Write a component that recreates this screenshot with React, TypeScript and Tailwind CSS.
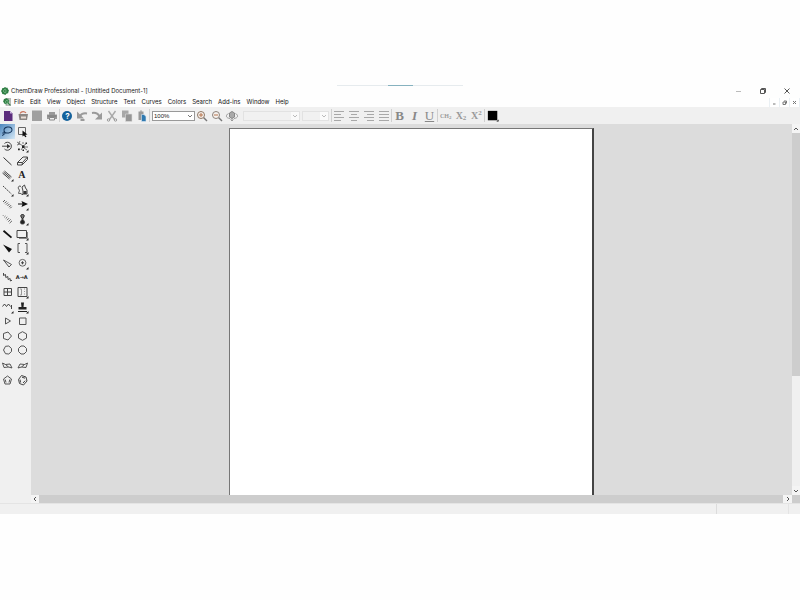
import React, { useState } from 'react';

const menus = [
  'File',
  'Edit',
  'View',
  'Object',
  'Structure',
  'Text',
  'Curves',
  'Colors',
  'Search',
  'Add-ins',
  'Window',
  'Help',
];

// little triangle for tools that open a flyout
const More = () => <path d="M13.5 11v2.5H11z" fill="#222" stroke="none" />;

const Icon = ({ children, className = 'w-[14px] h-[14px]' }: any) => (
  <svg
    viewBox="0 0 14 14"
    className={className}
    fill="none"
    stroke="#444"
    strokeWidth="1"
  >
    {children}
  </svg>
);

const AppLogo = ({ doc = false }: any) => (
  <Icon className="w-[8px] h-[8px] shrink-0">
    {doc && <path d="M5 1h9v12H5z" fill="#c4c9c4" stroke="#999" />}
    <path
      d="M7 0l2 1.500 2.500-.2.500 2.400L14 6l-1 2.500-.5 2.500-2.500.5L7.500 14 5 12.500l-2.700-.3L1.500 9.500 0 7l1.500-2.300.5-2.500 2.700-.4z"
      fill="#2e7d43"
      stroke="none"
      transform={doc ? 'scale(.8)' : undefined}
    />
    <path d="M9 4.500C7 3 4.500 4.500 4.500 7s2.500 3.500 4.500 2.500M7 7h3" stroke="#a9dcb2" />
    {doc && <path d="M9 9l4 4" stroke="#2e7d43" strokeWidth="2" />}
  </Icon>
);

const tools = [
  {
    name: 'Lasso',
    icon: (
      <>
        <ellipse cx="8" cy="6" rx="4" ry="3" transform="rotate(-12 8 6)" stroke="#16365c" />
        <path d="M5 8c-2-.5-3 1.500-1.500 2s2-1 1-2M3.500 10l-1 2" stroke="#16365c" />
      </>
    ),
  },
  {
    name: 'Marquee',
    icon: (
      <>
        <path d="M3.500 3.500h7v7h-7z" stroke="#666" />
        <path d="M7.500 6.500l5 4-2.300.3 1.300 2-1.200.5L9 11.500l-1.500 1z" fill="#111" stroke="none" />
      </>
    ),
  },
  {
    name: 'Structure Perspective',
    icon: (
      <>
        <path d="M4.500 4.500a4 4 0 1 1 0 5.500M2 7.200h6" />
        <path d="M7 5v4.500l3.500-2.200z" fill="#333" stroke="none" />
      </>
    ),
  },
  {
    name: 'Mass Fragmentation',
    icon: (
      <>
        <path d="M2 3l3 2M5 2L3.500 5M2 6l3-1M5 5l3 2M8 5V3M8 7l3-2M8 8l-2 3M9 9l3 2M8 8h5" strokeWidth=".7" />
        <path d="M7 6.500h2.500v2.500H7zM3 9.500h1.800v1.800H3zM10.500 3.500h1.500v1.500h-1.500zM7.500 10.500h1.500v1.500H7.500z" fill="#222" stroke="none" />
        <More />
      </>
    ),
  },
  { name: 'Solid Bond', icon: <path d="M3.500 3.500l8 7.500" stroke="#333" /> },
  {
    name: 'Eraser',
    icon: (
      <>
        <path d="M2.500 8.500L8 3h4.500L7.500 8.500z" />
        <path d="M2.500 8.500v2.500h4.500l.5-2.500M7 11l5.500-5.500V3" />
      </>
    ),
  },
  {
    name: 'Multiple Bonds',
    icon: (
      <>
        <path d="M2.500 5l7 6M3.500 4l7 6M4.500 3l7 6" stroke="#333" strokeWidth=".9" />
        <More />
      </>
    ),
  },
  { name: 'Text', letter: 'A' },
  {
    name: 'Dashed Bond',
    icon: (
      <>
        <path d="M3 3l8.500 8" strokeDasharray="2 .8" />
        <More />
      </>
    ),
  },
  {
    name: 'Pen',
    icon: (
      <>
        <path d="M6 3.500C3.500 2 2.500 5 4 6.500S2 11 4.500 10.500 6 12 8 11.500" />
        <path d="M7 4l2.500-2L10.500 5 12 7v4H8V8z" strokeWidth="1" />
        <path d="M8.500 8h3v3h-3z" fill="#333" stroke="none" />
        <More />
      </>
    ),
  },
  {
    name: 'Hashed Bond',
    icon: (
      <path
        d="M3 5l2-2M4.500 6.300l2-2M6 7.600l2-2M7.500 8.900l2-2M9 10.200l2-2M10.200 11.300l1.500-1.500"
        stroke="#444"
        strokeWidth=".9"
      />
    ),
  },
  {
    name: 'Arrow',
    icon: (
      <>
        <path d="M3 7h5" stroke="#111" />
        <path d="M6.500 4l6.500 3-6.500 3L7.500 7z" fill="#111" stroke="none" />
        <More />
      </>
    ),
  },
  {
    name: 'Hashed Wedged Bond',
    icon: (
      <path
        d="M3 3.700l.7-.7M4.300 5.200l1.200-1.200M5.700 6.600l1.600-1.600M7 8.200l2-2M8.300 9.700l2.400-2.400M9.600 11.200l2.400-2.400"
        stroke="#555"
        strokeWidth=".9"
      />
    ),
  },
  {
    name: 'Orbital',
    icon: (
      <>
        <path d="M7.500 7C5 4 5.500 2.500 7.500 2.500S10 4 7.500 7z" stroke="#222" fill="#777" />
        <path d="M7.500 7c-3 3-2.500 5 0 5s3-2 0-5z" fill="#222" />
        <More />
      </>
    ),
  },
  { name: 'Bold Bond', icon: <path d="M3.500 3.800l8 6.800" stroke="#111" strokeWidth="1.800" /> },
  {
    name: 'Drawing Elements',
    icon: (
      <>
        <path d="M2 3.500h9.500v7H2z" />
        <path d="M4 11.500h8.500V5" stroke="#888" />
        <More />
      </>
    ),
  },
  { name: 'Wedged Bond', icon: <path d="M3 3.500l9 4.500-3 3.500z" fill="#111" stroke="none" /> },
  {
    name: 'Brackets',
    icon: (
      <>
        <path d="M5 2.500H3v9H5M10 2.500h2v9H10" stroke="#555" />
        <More />
      </>
    ),
  },
  { name: 'Hollow Wedged Bond', icon: <path d="M3.500 4l8 4.500L9 11z" stroke="#444" strokeWidth=".9" /> },
  {
    name: 'Chemical Symbol',
    icon: (
      <>
        <circle cx="7.500" cy="6.800" r="3.400" stroke="#666" />
        <path d="M6 6.800h3M7.500 5.300v3" />
        <More />
      </>
    ),
  },
  {
    name: 'Wavy Bond',
    icon: <path d="M3.500 3v2.500l2-1 .3 3 2-1 .3 3 2-1 .3 2.500 1.600-.8" stroke="#333" strokeWidth=".9" />,
  },
  { name: 'Reaction Mapping', letter: 'A→A' },
  {
    name: 'Table',
    icon: <path d="M4 3.500h7.500v7H4zM7.500 3.500v7M4 7h7.500" stroke="#444" />,
  },
  {
    name: 'TLC Plate',
    icon: (
      <>
        <path d="M3 2.500h9v9H3z" stroke="#444" />
        <path d="M5 4h1.500v6H5M9 4h1M9 6.500h1M9 9h1" stroke="#999" />
        <More />
      </>
    ),
  },
  {
    name: 'Acyclic Chain',
    icon: (
      <>
        <path d="M2.500 6.500L4.500 4l2 2.500 2-2.500 2 2.500M11.500 5v4" stroke="#333" strokeWidth=".9" />
        <More />
      </>
    ),
  },
  {
    name: 'Templates',
    icon: (
      <>
        <path d="M6 2.500h3L8.500 7h3v2.500h-8V7h3z" fill="#222" stroke="none" />
        <path d="M3 11.500h9" stroke="#222" />
        <More />
      </>
    ),
  },
  { name: 'Cyclopropane Ring', icon: <path d="M5.500 4v6L10.500 7z" stroke="#555" /> },
  { name: 'Cyclobutane Ring', icon: <path d="M4.500 4h6.500v6.500H4.500z" stroke="#555" /> },
  { name: 'Cyclopentane Ring', icon: <path d="M3.500 4.500L8 3l3.500 4L8 11 3.500 9.500z" stroke="#555" /> },
  { name: 'Cyclohexane Ring', icon: <path d="M7.500 2.700l4 2.200v4.200l-4 2.200-4-2.200V4.900z" stroke="#555" /> },
  { name: 'Cycloheptane Ring', icon: <path d="M5.500 3.300l3.300-.3 2.700 2.500v3L8.800 11l-3.300-.3-2-3.700z" stroke="#555" /> },
  { name: 'Cyclooctane Ring', icon: <path d="M6 3h3l2.500 2.500v3L9 11H6L3.500 8.500v-3z" stroke="#555" /> },
  {
    name: 'Chair Cyclohexane 1',
    icon: <path d="M2.500 5l3 1.500 4.500-.5 2 4-3.500-1L4 9.500zM5.500 6.500L8.500 9" stroke="#444" strokeWidth=".9" />,
  },
  {
    name: 'Chair Cyclohexane 2',
    icon: <path d="M12.500 5l-3 1.500L5 6l-2 4 3.500-1 4.500.5zM9.500 6.500L6.500 9" stroke="#444" strokeWidth=".9" />,
  },
  {
    name: 'Cyclopentadiene Ring',
    icon: <path d="M7.500 3l4 3-1.500 5H5L3.500 6zM5.200 6.500l.8 3M9.800 6.500l-.8 3" stroke="#555" />,
  },
  {
    name: 'Benzene Ring',
    icon: <path d="M6.500 2.500l4.500 1.500 1 4-3.500 4L4.500 10.500l-1-4zM5 6.500l.6 3M7 4.200l3 1M8 10l2.200-2.300" stroke="#444" />,
  },
];

const fileIcons = [
  {
    name: 'New',
    icon: (
      <>
        <path d="M3 2h6l2.500 2.500V12H3z" fill="#5b2d7c" stroke="none" />
        <path d="M9 2v2.500h2.500z" fill="#c9b4de" stroke="none" />
      </>
    ),
  },
  {
    name: 'Open',
    icon: (
      <>
        <path d="M2.500 5h9.500l-1 6H3.500z" fill="#8b8582" stroke="none" />
        <path d="M4 4.500c1.500-2.500 4.500-2.500 6-.5" stroke="#c9735a" strokeWidth="1.200" />
        <path d="M5 7.500h5v2H5z" fill="#e8dcd5" stroke="none" />
      </>
    ),
  },
  {
    name: 'Save',
    icon: <path d="M2 1.500h10v10.500H2z" fill="#a0a0a0" stroke="none" />,
  },
  {
    name: 'Print',
    icon: (
      <>
        <path d="M4 3h6v2.500h2v4.500H2V5.500h2z" fill="#999" stroke="none" />
        <path d="M4.500 8.500h5v2.500h-5z" fill="#eee" stroke="#888" />
        <path d="M2.500 7h9" stroke="#777" />
      </>
    ),
  },
];

const editIcons = [
  { name: 'Help', help: true },
  {
    name: 'Undo',
    icon: (
      <>
        <path d="M2 2.500V9.500H9L7 7.500 4.500 5z" fill="#9a9a9a" stroke="none" />
        <path d="M5 7C7 4 9.500 4 12 4.500M5.500 11h4" stroke="#9a9a9a" strokeWidth="2" />
      </>
    ),
  },
  {
    name: 'Redo',
    icon: (
      <>
        <path d="M12 3.500V10.500H5l2.500-2.500z" fill="#9a9a9a" stroke="none" />
        <path d="M9.500 7.500C8 4.500 5 3.500 2 4" stroke="#9a9a9a" strokeWidth="2" />
      </>
    ),
  },
  {
    name: 'Cut',
    icon: (
      <>
        <path d="M3.500 2l6 8.500M10.500 2l-6 8.500" stroke="#aaa" strokeWidth="1.400" />
        <circle cx="3.500" cy="11" r="1.200" stroke="#999" />
        <circle cx="10.500" cy="11" r="1.200" stroke="#999" />
      </>
    ),
  },
  {
    name: 'Copy',
    icon: (
      <>
        <path d="M2 1.500h6.500v7H2z" fill="#a8a8a8" stroke="none" />
        <path d="M5.500 5h6.500v7.500H5.500z" fill="#969696" stroke="#ddd" strokeWidth=".6" />
      </>
    ),
  },
  {
    name: 'Paste',
    icon: (
      <>
        <path d="M3.500 2.500h5v8.500h-5z" fill="#999" stroke="none" />
        <path d="M5 1.500h2v1.500H5z" fill="#aaa" stroke="none" />
        <path d="M6.500 5.500h2.500l2 2v5H6.500z" fill="#2f79b0" stroke="#dbe8f2" strokeWidth=".6" />
      </>
    ),
  },
];

const zoomIcons = [
  {
    name: 'Zoom In',
    icon: (
      <>
        <path d="M8.500 8.500l3.500 3.500" stroke="#777" strokeWidth="1.400" />
        <circle cx="6" cy="6" r="3.500" stroke="#8f7764" fill="#f7f2ee" />
        <path d="M4 6h4M6 4v4" stroke="#b5744f" />
      </>
    ),
  },
  {
    name: 'Zoom Out',
    icon: (
      <>
        <path d="M8.500 8.500l3.500 3.500" stroke="#777" strokeWidth="1.400" />
        <circle cx="6" cy="6" r="3.500" stroke="#8d827a" fill="#f7f2ee" />
        <path d="M4 6h4" stroke="#b5744f" />
      </>
    ),
  },
  {
    name: 'Rotate 3D',
    icon: (
      <>
        <path d="M4.500 4L7 2.500 9.500 4v4L7 9.500 4.500 8z" fill="#aaa" stroke="#888" />
        <path d="M3.500 4.500C.5 6 .5 9 5 9.500M10.500 4.500c3 1.500 3 4.500-1.500 5M7 9v3M5.500 10.500L7 12l1.500-1.500" stroke="#999" />
      </>
    ),
  },
];

const alignIcons = [
  { name: 'Align Left', d: 'M2 2.500h10M2 5.500h7M2 8.500h10M2 11.500h7' },
  { name: 'Align Center', d: 'M2 2.500h10M4 5.500h6M2 8.500h10M4 11.500h6' },
  { name: 'Align Right', d: 'M2 2.500h10M5 5.500h7M2 8.500h10M5 11.500h7' },
  { name: 'Justify', d: 'M2 2.500h10M2 5.500h10M2 8.500h10M2 11.500h10' },
];

const center = 'flex items-center justify-center';

const Separator = () => <div className="w-px h-[13px] bg-[#d0d0d0] shrink-0" />;

const IconButton = ({ name, children }: any) => (
  <button aria-label={name} className={center}>
    {children}
  </button>
);

const Combo = ({ label, width, value = '', off = false }: any) => (
  <div className={`relative h-[10px] shrink-0 ${width}`}>
    <select
      aria-label={label}
      disabled={off}
      className={`appearance-none block w-full h-full pl-px font-['Liberation_Sans',sans-serif] text-[6px] leading-[8px] border text-[#222] ${
        off ? 'bg-[#f1f1f1] border-[#e2e2e2]' : 'bg-white border-[#999]'
      }`}
    >
      <option>{value}</option>
    </select>
    <svg
      viewBox="0 0 8 8"
      className={`absolute right-px top-px w-[8px] h-[8px] pointer-events-none ${
        off ? 'bg-[#fafafa]' : ''
      }`}
      fill="none"
      stroke={off ? '#bbb' : '#777'}
    >
      <path d="M2 3l2 2 2-2" />
    </svg>
  </div>
);

const ScrollArrow = ({ name, d, className }: any) => (
  <button aria-label={name} className={`${center} bg-[#f4f4f4] shrink-0 ${className}`}>
    <svg viewBox="0 0 8 8" className="w-[8px] h-[8px]" fill="none" stroke="#555">
      <path d={d} />
    </svg>
  </button>
);

const TitleBar = () => (
  <header className="relative flex items-center justify-between h-[13px] pl-px">
    <div className="absolute top-px left-1/2 -translate-x-1/2 w-[126px] h-px bg-[#e6ebee] flex justify-center">
      <div className="w-[25px] h-px bg-[#86b2bf]" />
    </div>
    <div className="flex items-center gap-[2px]">
      <AppLogo />
      <h1 className="text-[6px] leading-[8px] text-[#222] whitespace-nowrap">
        ChemDraw Professional - [Untitled Document-1]
      </h1>
    </div>
    <div className="flex items-center gap-[16px] pr-[9px]">
      <button aria-label="Minimize">
        <svg viewBox="0 0 8 8" className="w-[8px] h-[8px]" stroke="#bbb">
          <path d="M1 4.500h5" />
        </svg>
      </button>
      <button aria-label="Restore">
        <svg viewBox="0 0 8 8" className="w-[8px] h-[8px]" fill="none" stroke="#555">
          <path d="M1.500 2.500h4v4h-4zM2.500 2.500v-1h4v4h-1" />
        </svg>
      </button>
      <button aria-label="Close">
        <svg viewBox="0 0 8 8" className="w-[8px] h-[8px]" stroke="#555">
          <path d="M1.500 1.500l5 5M6.500 1.500l-5 5" />
        </svg>
      </button>
    </div>
  </header>
);

const MenuBar = () => (
  <nav className="flex items-center justify-between h-[10px] pl-[3px]">
    <div className="flex items-center gap-[3px]">
      <AppLogo doc />
      <div className="flex gap-[6px]">
        {menus.map((m) => (
          <button key={m} className="text-[6px] leading-[8px] text-[#111]">
            {m}
          </button>
        ))}
      </div>
    </div>
    <div className="flex gap-px bg-[#eaf0f4] px-px">
      {[
        { name: 'Minimize document', d: 'M3 6h2.500' },
        { name: 'Restore document', d: 'M3 4h2.500v2.500H3zM4 3h2.500v2.500' },
        { name: 'Close document', d: 'M3 3l3 3M6 3L3 6' },
      ].map((b) => (
        <button key={b.name} aria-label={b.name} className={`${center} w-[9px] h-[9px] bg-white`}>
          <svg viewBox="0 0 9 9" className="w-[9px] h-[9px]" fill="none" stroke="#777">
            <path d={b.d} />
          </svg>
        </button>
      ))}
    </div>
  </nav>
);

const Toolbar = () => (
  <div className="flex items-center h-[17px] bg-[#f0f0f0] pl-px">
    <div className="grid grid-cols-4 w-[58px]">
      {fileIcons.map((i) => (
        <IconButton key={i.name} name={i.name}>
          <Icon>{i.icon}</Icon>
        </IconButton>
      ))}
    </div>
    <Separator />
    <div className="grid grid-cols-6 w-[89px]">
      {editIcons.map((i) => (
        <IconButton key={i.name} name={i.name}>
          {i.help ? (
            <span className={`${center} w-[10px] h-[10px] rounded-full bg-[#14629c] text-white text-[8px] leading-[10px] font-bold`}>
              ?
            </span>
          ) : (
            <Icon>{i.icon}</Icon>
          )}
        </IconButton>
      ))}
    </div>
    <Separator />
    <div className="flex items-center pl-[2px]">
      <Combo label="Zoom" width="w-[43px]" value="100%" />
      <div className="grid grid-cols-3 w-[44px]">
        {zoomIcons.map((i) => (
          <IconButton key={i.name} name={i.name}>
            <Icon>{i.icon}</Icon>
          </IconButton>
        ))}
      </div>
    </div>
    <div className="flex gap-[2px] pl-[4px] pr-[2px]">
      <Combo label="Font" width="w-[57px]" off />
      <Combo label="Font size" width="w-[27px]" off />
    </div>
    <Separator />
    <div className="grid grid-cols-4 w-[59px]">
      {alignIcons.map((i) => (
        <IconButton key={i.name} name={i.name}>
          <Icon>
            <path d={i.d} stroke="#a8a8a8" />
          </Icon>
        </IconButton>
      ))}
    </div>
    <Separator />
    <div className="grid grid-cols-3 w-[45px] font-['Liberation_Serif',serif] text-[13px] leading-[14px] font-bold text-[#888]">
      <button aria-label="Bold">B</button>
      <button aria-label="Italic" className="italic">
        I
      </button>
      <button aria-label="Underline" className="font-normal underline">
        U
      </button>
    </div>
    <Separator />
    <div className="grid grid-cols-3 items-center w-[46px] font-['Liberation_Serif',serif] font-bold text-[#999] text-[10px] leading-[12px]">
      <button aria-label="Formula" className="text-[6px]">
        CH<sub className="text-[5px]">2</sub>
      </button>
      <button aria-label="Subscript">
        X<sub className="text-[7px]">2</sub>
      </button>
      <button aria-label="Superscript">
        X<sup className="text-[7px]">2</sup>
      </button>
    </div>
    <Separator />
    <button aria-label="Color" className="ml-[2px]">
      <Icon className="w-[12px] h-[12px]">
        <path d="M1 1h11v11H1z" fill="#000" stroke="none" />
        <path d="M13.500 11v2.500H11z" fill="#000" stroke="none" />
      </Icon>
    </button>
  </div>
);

const App = () => {
  const [tool, setTool] = useState('Lasso');

  return (
    <div className="min-h-screen bg-[#fefefe] py-[84px] font-['Inter','Open_Sans',sans-serif]">
      <TitleBar />
      <MenuBar />
      <Toolbar />
      <main className="flex h-[379px] bg-[#f0f0f0]">
        <aside className="w-[31px] shrink-0">
          <div className="grid grid-cols-2 auto-rows-fr w-[29px] h-[263px]">
            {tools.map((t) => (
              <button
                key={t.name}
                aria-label={t.name}
                onClick={() => setTool(t.name)}
                className={`${center} ${
                  tool === t.name ? 'bg-linear-to-br from-[#4a86bd] to-[#d5e8f5]' : ''
                }`}
              >
                {t.letter ? (
                  <span
                    className={`font-bold text-[#222] ${
                      t.letter === 'A'
                        ? "font-['Liberation_Serif',serif] text-[10px] leading-[12px]"
                        : "font-['DejaVu_Sans',sans-serif] text-[5px] leading-[8px]"
                    }`}
                  >
                    {t.letter}
                  </span>
                ) : (
                  <Icon className="w-[14px] h-[14px] shrink-0">{t.icon}</Icon>
                )}
              </button>
            ))}
          </div>
        </aside>
        <div className="flex flex-col flex-1 min-w-0">
          <div className="flex flex-1 min-h-0">
            <div className="flex-1 bg-[#dcdcdc] pt-[4px] overflow-hidden">
              <div className="mx-auto w-[365px] h-full bg-white border-l border-t border-r-2 border-l-[#777] border-t-[#777] border-r-[#444]" />
            </div>
            <div className="flex flex-col w-[8px] bg-[#f0f0f0]">
              <ScrollArrow name="Scroll up" d="M2 5l2-2 2 2" className="h-[9px]" />
              <div className="h-[243px] bg-[#cdcdcd]" />
              <div className="flex-1" />
              <ScrollArrow name="Scroll down" d="M2 3l2 2 2-2" className="h-[9px]" />
            </div>
          </div>
          <div className="flex h-[8px] bg-[#cdcdcd]">
            <ScrollArrow name="Scroll left" d="M5 2L3 4l2 2" className="w-[8px]" />
            <div className="flex-1" />
            <ScrollArrow name="Scroll right" d="M3 2l2 2-2 2" className="w-[9px]" />
            <div className="w-[8px]" />
          </div>
        </div>
      </main>
      <footer className="flex justify-end h-[11px] bg-[#f0f0f0] border-t border-[#e4e4e4]">
        <div className="w-[72px] border-l border-[#dcdcdc]" />
        <div className="w-[12px] border-l border-[#e4e4e4]" />
      </footer>
    </div>
  );
};

export default App;
